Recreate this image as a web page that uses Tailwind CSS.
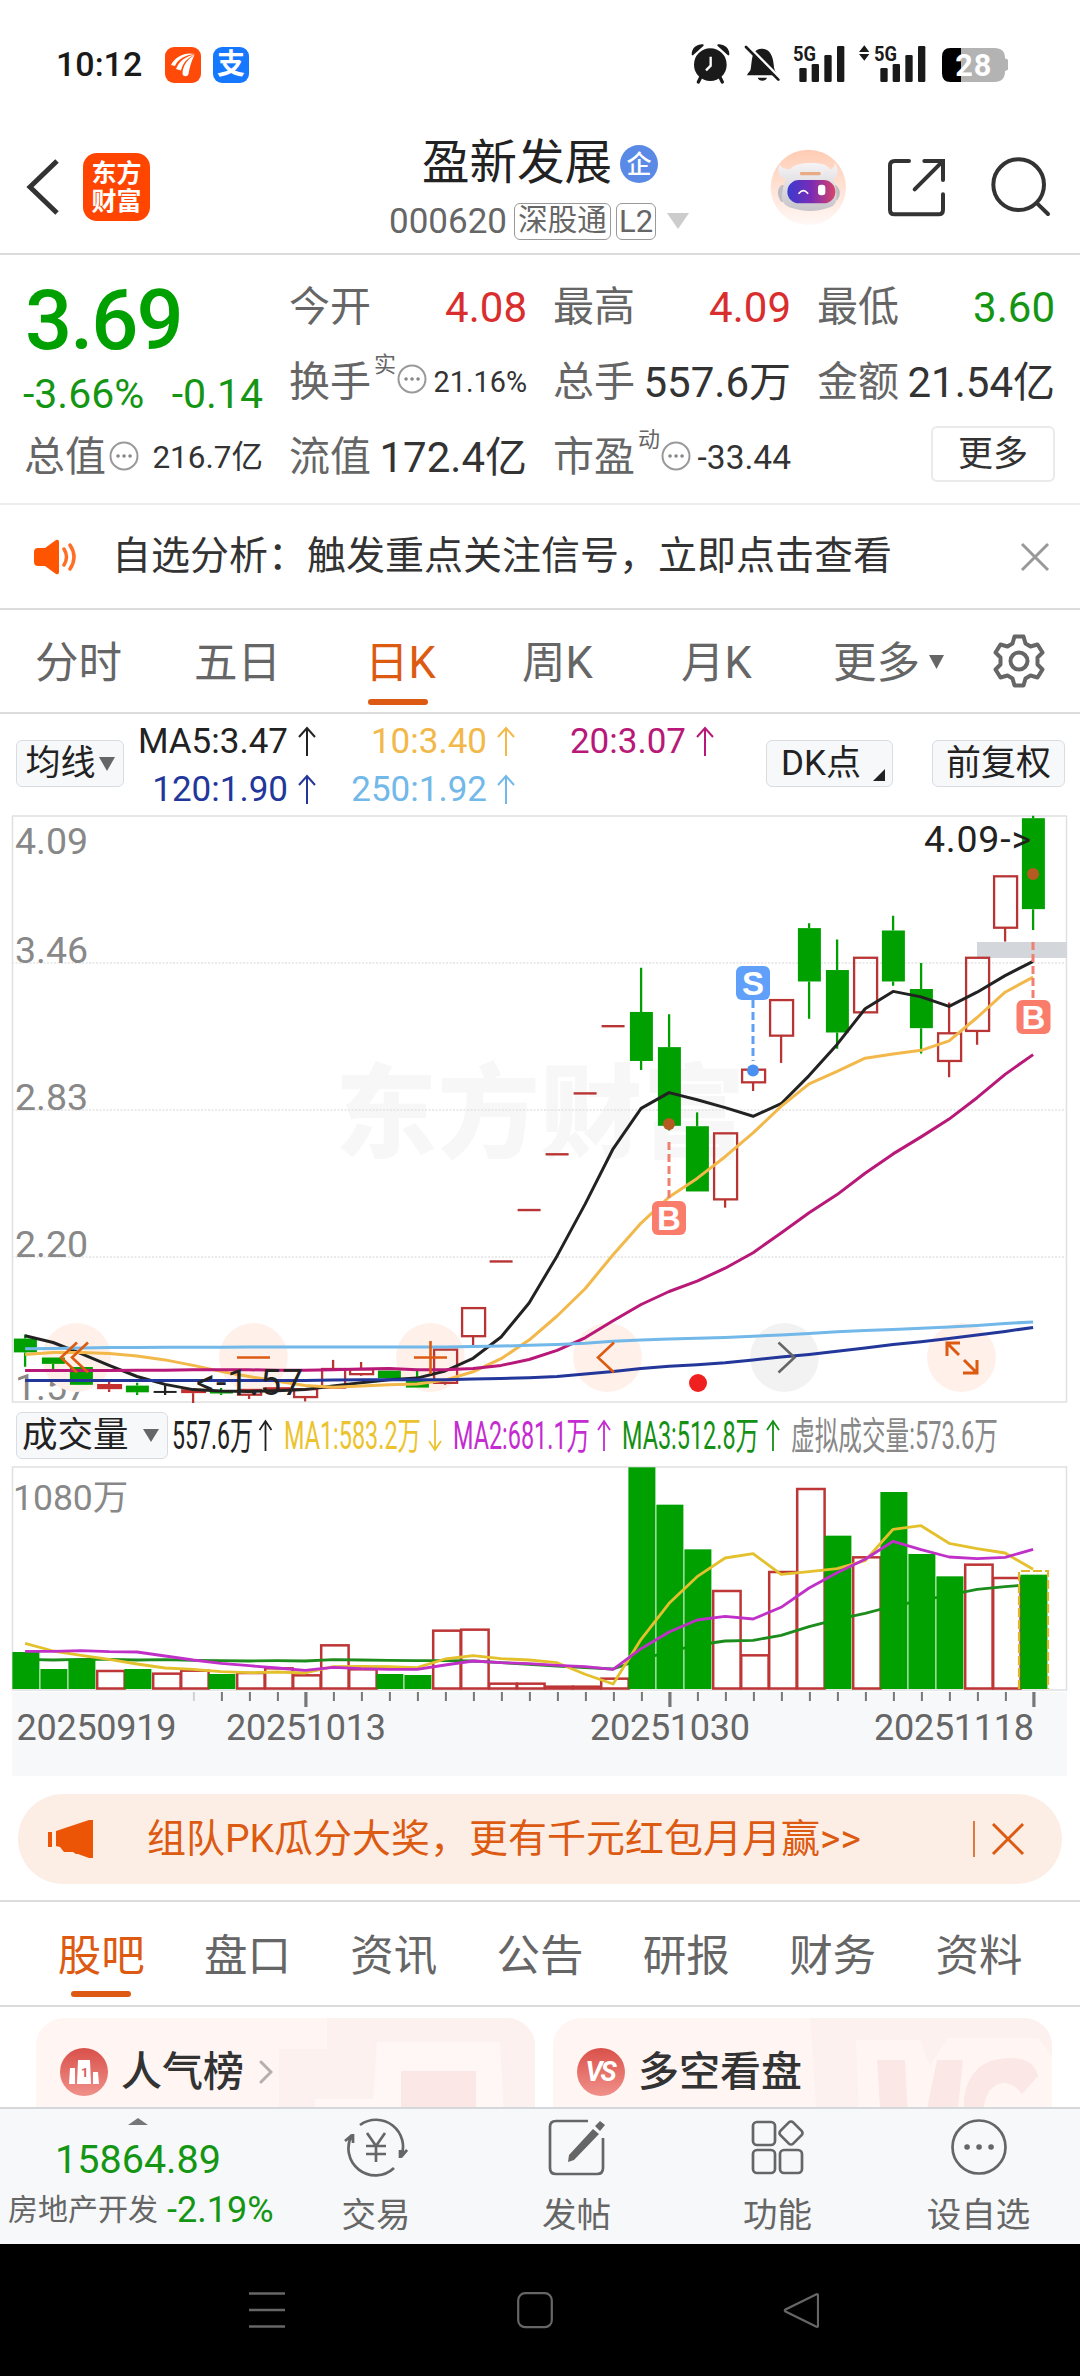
<!DOCTYPE html>
<html lang="zh-CN">
<head>
<meta charset="utf-8">
<title>盈新发展 000620</title>
<script src="https://cdn.jsdelivr.net/npm/@tailwindcss/browser@4"></script>
</head>
<body class="bg-white">
<div class="w-[1080px] h-[2376px] overflow-hidden flex flex-col bg-white text-[#333] leading-none whitespace-nowrap font-[Roboto,'Noto_Sans_CJK_SC',sans-serif]">

  <!-- status bar -->
  <div class="h-[120px] shrink-0 flex items-start pl-[56px]">
    <div class="mt-[46px] h-[36px] flex items-center text-[34px] font-medium text-[#1a1a1a] w-[109px]">10:12</div>
    <div class="mt-[47px] w-9 h-9 rounded-[9px] bg-[#ff4a0a]">
      <svg class="w-9 h-9" viewBox="0 0 36 36" fill="#fff"><path d="M6 18C11 9 20 5 30 7c-10 1-17 5-20 12zM11 22C14 14 21 9 30 7.500c-8 4-12 8-14 16zM17.500 27c0-8 5-15 12-19-3 6-5 12-6 19-1 3-5 3-6 0z"/></svg>
    </div>
    <div class="mt-[47px] ml-3 w-9 h-9 rounded-[9px] bg-[#1677ff] text-white text-[28px] font-bold flex items-center justify-center">支</div>
    <svg class="mt-[30px] ml-[431px] w-[340px] h-[70px] font-[Roboto]" viewBox="0 0 1020 210" fill="#1a1a1a">
      <circle cx="91" cy="104" r="49"/><path d="M38 73a27 27 0 0 1 30-27zM145 73a27 27 0 0 0-30-27z" stroke="#1a1a1a" stroke-width="6" stroke-linejoin="round"/><path d="M63 140l-8 16M119 140l8 16" stroke="#1a1a1a" stroke-width="10" stroke-linecap="round"/><path d="M92 80v27l-14 14" fill="none" stroke="#fff" stroke-width="7"/>
      <path d="M202 136c-3-2 8-10 10-18 5-24 0-60 32-62 37 0 36 44 39 60 2 10 12 18 8 20zM233 143h28c-3 12-25 12-28 0z"/><path d="M202 46l99 100" stroke="#fff" stroke-width="9"/><path d="M198 51l97 98" stroke="#1a1a1a" stroke-width="8" stroke-linecap="round"/>
      <g id="bars"><rect x="358" y="114" width="22" height="42" rx="4"/><rect x="395" y="102" width="22" height="54" rx="4"/><rect x="433" y="75" width="22" height="81" rx="4"/><rect x="471" y="48" width="22" height="108" rx="4"/>
      <text x="339" y="92" font-size="62" font-weight="700" textLength="69" lengthAdjust="spacingAndGlyphs">5G</text></g>
      <use href="#bars" x="243"/>
      <path d="M537 66l16-20 15 20zM537 72l16 20 15-20z"/>
      <path d="M810 54h133q32 0 32 31l9 4v30l-9 4q0 33-32 33H810z" fill="#b3b3b3"/><path d="M843 54v102h-32q-25 0-25-26V80q0-26 25-26z" fill="#000"/>
      <text x="826" y="139" font-size="92" font-weight="700" fill="#fff" textLength="108">28</text>
    </svg>
  </div>

  <!-- title bar -->
  <div class="h-[135px] shrink-0 flex border-b-2 border-[#dcdcdc]">
    <svg class="w-[34px] h-[56px] ml-[26px] mt-[39px]" viewBox="0 0 34 56" fill="none" stroke="#333" stroke-width="5"><path d="M31 2L4 28l27 26"/></svg>
    <div class="ml-[23px] mt-[33px] w-[67px] h-[68px] rounded-[14px] bg-[#ff4500] text-white text-[25px] font-bold flex flex-col items-center justify-center gap-[3px]"><span>东方</span><span>财富</span></div>
    <div class="ml-[234px] w-[310px] flex flex-col">
      <div class="flex items-center h-[50px] mt-[19px] pl-[38px]">
        <span class="text-[47.500px] text-[#222]">盈新发展</span>
        <span class="ml-[8px] w-[38px] h-[38px] rounded-full bg-[#5b8ae6] text-white text-[25px] font-medium flex items-center justify-center">企</span>
      </div>
      <div class="flex items-center h-[38px] mt-[13px] pl-[4px] text-[#666]">
        <span class="text-[35px] w-[120px] text-center">000620</span>
        <span class="ml-[6px] w-[97px] h-[37px] rounded-[6px] border border-[#999] text-[29.500px] flex items-center justify-center">深股通</span>
        <span class="ml-[5px] w-[40px] h-[37px] rounded-[6px] border border-[#999] text-[31px] flex items-center justify-center">L2</span>
        <svg class="ml-[11px] w-[22px] h-[16px]" viewBox="0 0 22 16"><path d="M0 0h22L11 16z" fill="#ccc"/></svg>
      </div>
    </div>
    <svg class="ml-[66px] mt-[20px] w-[320px] h-[100px]" viewBox="0 0 960 300" fill="none" stroke="#333" stroke-width="12" stroke-linecap="round">
      <defs>
        <linearGradient id="peach" x1="0" y1="0" x2="0" y2="1"><stop offset="0" stop-color="#ffccb4"/><stop offset="1" stop-color="#fff8f5"/></linearGradient>
        <linearGradient id="visor"><stop offset="0" stop-color="#3a3bd0"/><stop offset=".5" stop-color="#7a2bb4"/><stop offset="1" stop-color="#d8446a"/></linearGradient>
        <linearGradient id="helmet" x1="0" y1="0" x2="0" y2="1"><stop offset="0" stop-color="#f6f4f5"/><stop offset="1" stop-color="#c6c4ca"/></linearGradient>
      </defs>
      <g stroke="none"><circle cx="145" cy="142" r="113" fill="url(#peach)"/>
      <path d="M65 135q-22 18-2 50h20v-50zM228 135q22 22 4 46h-20v-46z" fill="#c0bdc4"/>
      <path d="M78 118q-32-12-20-44 8 12 32 14 14-20 62-20t58 20q16-4 14-20 20 30-4 50 8 20 10 50 2 26-20 34-58 22-122 0-26-10-22-40 2-24 12-44z" fill="url(#helmet)"/>
      <rect x="82" y="120" width="144" height="70" rx="35" fill="url(#visor)"/><rect x="120" y="96" width="62" height="10" rx="4" fill="#e8ab84"/>
      <rect x="174" y="134" width="22" height="32" rx="9" fill="#fff"/><path d="M117 160q13-16 26 0" stroke="#fff" stroke-width="5" fill="none"/></g>
      <path d="M447 63h-43q-14 0-14 14v132q0 14 14 14h131q14 0 14-14v-46M493 63h56v57M547 65l-83 83"/>
      <circle cx="776" cy="134" r="76"/><path d="M832 191l32 31"/>
    </svg>
  </div>

  <!-- quote -->
  <div class="h-[250px] shrink-0 border-b-2 border-[#eee] grid grid-cols-[238px_238px_238px_238px] gap-x-[26px] pl-[25px] text-[41px] text-[#666]">
    <div class="pt-[8px]">
      <div class="h-[114px] flex items-center text-[83px] tracking-[-2px] font-medium text-[#00a000]">3.69</div>
      <div class="h-[34px] flex items-center justify-between text-[41px] text-[#149614]"><span class="-ml-0.5">-3.66%</span><span>-0.14</span></div>
      <div class="mt-[9px] h-[75px] flex items-center -ml-px">总值<svg class="w-[30px] h-[30px] ml-[3px] mb-1" viewBox="0 0 30 30"><circle cx="15" cy="15" r="13.500" fill="none" stroke="#999" stroke-width="2"/><path d="M9 15h.1M15 15h.1M21 15h.1" stroke="#888" stroke-width="3.500" stroke-linecap="round"/></svg><span class="ml-auto text-[31.500px] text-[#333]">216.7亿</span></div>
    </div>
    <div class="pt-[15px]">
      <div class="h-[75px] flex items-center justify-between">今开<span class="text-[#d92e2e] text-[42px]">4.08</span></div>
      <div class="h-[75px] flex items-center">换手<span class="text-[22px] mb-9 ml-[3px]">实</span><svg class="w-[30px] h-[30px] mb-2 ml-px" viewBox="0 0 30 30"><circle cx="15" cy="15" r="13.500" fill="none" stroke="#999" stroke-width="2"/><path d="M9 15h.1M15 15h.1M21 15h.1" stroke="#888" stroke-width="3.500" stroke-linecap="round"/></svg><span class="ml-auto text-[28.800px] text-[#333]">21.16%</span></div>
      <div class="h-[75px] flex items-center justify-between">流值<span class="text-[#333] text-[42px]">172.4亿</span></div>
    </div>
    <div class="pt-[15px]">
      <div class="h-[75px] flex items-center justify-between">最高<span class="text-[#d92e2e] text-[42px]">4.09</span></div>
      <div class="h-[75px] flex items-center justify-between">总手<span class="text-[#333] text-[42px]">557.6万</span></div>
      <div class="h-[75px] flex items-center">市盈<span class="text-[22px] mb-9 ml-[3px]">动</span><svg class="w-[30px] h-[30px] mb-1 ml-px" viewBox="0 0 30 30"><circle cx="15" cy="15" r="13.500" fill="none" stroke="#999" stroke-width="2"/><path d="M9 15h.1M15 15h.1M21 15h.1" stroke="#888" stroke-width="3.500" stroke-linecap="round"/></svg><span class="ml-auto text-[33.500px] text-[#333]">-33.44</span></div>
    </div>
    <div class="pt-[15px]">
      <div class="h-[75px] flex items-center justify-between">最低<span class="text-[#149614] text-[42px]">3.60</span></div>
      <div class="h-[75px] flex items-center justify-between">金额<span class="text-[#333] text-[42px]">21.54亿</span></div>
      <div class="ml-auto mt-[6px] w-[124px] h-[56px] rounded-[6px] border-2 border-[#e8eaec] flex items-center justify-center text-[35px] text-[#333]">更多</div>
    </div>
  </div>

  <!-- notice -->
  <div class="h-[105px] shrink-0 border-b-2 border-[#dcdcdc] flex items-center pl-[33px]">
    <svg class="w-[46px] h-[36px]" viewBox="0 0 46 36"><path d="M5 9h7L23 1q3-1 3 2v30q0 3-3 2L12 27H5q-4 0-4-4V13q0-4 4-4z" fill="#ff5500"/><path d="M31 10q5 8 0 16M37 6q8 12 0 24" fill="none" stroke="#ff5500" stroke-width="3.500" stroke-linecap="round" opacity=".85"/></svg>
    <span class="ml-[33px] text-[39px]">自选分析：触发重点关注信号，立即点击查看</span>
    <svg class="ml-[128px] w-[30px] h-[30px]" viewBox="0 0 30 30"><path d="M2 2l26 26M28 2L2 28" stroke="#999" stroke-width="3"/></svg>
  </div>

  <!-- period tabs -->
  <div class="h-[104px] shrink-0 border-b-2 border-[#dcdcdc] flex pl-[35px] text-[43.500px] text-[#666]">
    <span class="mt-[32px] w-[159px]">分时</span>
    <span class="mt-[32px] w-[171px]">五日</span>
    <div class="relative pt-[32px] w-[157px] text-[#dc5a12]">日K<div class="absolute left-[3px] top-[89px] w-[60px] h-[6px] rounded-full bg-[#dc5a12]"></div></div>
    <span class="mt-[32px] w-[159px]">周K</span>
    <span class="mt-[32px] w-[152px]">月K</span>
    <span class="mt-[32px]">更多</span>
    <svg class="mt-[45px] ml-[9px] w-[15px] h-[14px]" viewBox="0 0 15 14"><path d="M0 0h15L7.500 14z" fill="#666"/></svg>
    <svg class="mt-[23px] ml-[47px] w-[56px] h-[56px]" viewBox="0 0 56 56" fill="none" stroke="#666" stroke-width="4" stroke-linejoin="round"><path d="M23.500 3.500h9l2 7 5 3 7-2 5 8-5 5v7l5 5-5 8-7-2-5 3-2 7h-9l-2-7-5-3-7 2-5-8 5-5v-7l-5-5 5-8 7 2 5-3z"/><circle cx="28" cy="28" r="8.500"/></svg>
  </div>

  <!-- moving averages -->
  <div class="h-[101px] shrink-0 flex items-start pl-[16px] text-[35px]">
    <div class="mt-[26px] w-[108px] h-[47px] rounded-[6px] border border-[#d9dde2] bg-[#f7f8fa] flex items-center justify-center gap-[3px] text-[35px] text-[#222]">均线<svg class="w-[16px] h-[14px]" viewBox="0 0 16 14"><path d="M0 0h16L8 14z" fill="#666"/></svg></div>
    <div class="mt-[3px] ml-[8px] w-[583px] grid grid-cols-[185px_199px_199px] grid-rows-[48px_48px]">
      <div class="flex items-center justify-end gap-[9px] text-[#222]">MA5:3.47<svg class="w-[20px] h-[30px]" viewBox="0 0 20 30" fill="none" stroke="currentColor" stroke-width="2"><path d="M10 30V2M2 11l8-9 8 9"/></svg></div>
      <div class="flex items-center justify-end gap-[9px] text-[#f2b84a]">10:3.40<svg class="w-[20px] h-[30px]" viewBox="0 0 20 30" fill="none" stroke="currentColor" stroke-width="2"><path d="M10 30V2M2 11l8-9 8 9"/></svg></div>
      <div class="flex items-center justify-end gap-[9px] text-[#b81877]">20:3.07<svg class="w-[20px] h-[30px]" viewBox="0 0 20 30" fill="none" stroke="currentColor" stroke-width="2"><path d="M10 30V2M2 11l8-9 8 9"/></svg></div>
      <div class="flex items-center justify-end gap-[9px] text-[#23379b]">120:1.90<svg class="w-[20px] h-[30px]" viewBox="0 0 20 30" fill="none" stroke="currentColor" stroke-width="2"><path d="M10 30V2M2 11l8-9 8 9"/></svg></div>
      <div class="flex items-center justify-end gap-[9px] text-[#72b8e8]">250:1.92<svg class="w-[20px] h-[30px]" viewBox="0 0 20 30" fill="none" stroke="currentColor" stroke-width="2"><path d="M10 30V2M2 11l8-9 8 9"/></svg></div>
    </div>
    <div class="mt-[26px] ml-[51px] w-[127px] h-[47px] rounded-[6px] border border-[#d9dde2] bg-[#f7f8fa] flex items-center pl-[14px] text-[#222]">DK点<svg class="ml-[12px] mt-[22px] w-[12px] h-[12px]" viewBox="0 0 12 12"><path d="M12 0v12H0z" fill="#222"/></svg></div>
    <div class="mt-[26px] ml-[39px] w-[133px] h-[47px] rounded-[6px] border border-[#d9dde2] bg-[#f7f8fa] flex items-center justify-center text-[#222]">前复权</div>
  </div>

  <!-- candlestick chart -->
  <svg id="kline" class="w-[1080px] h-[588px] shrink-0" viewBox="0 815 1080 588" fill="none"></svg>

  <!-- volume legend -->
  <div class="h-[63px] shrink-0 flex items-start pl-[16px]">
    <div class="mt-[9px] w-[152px] h-[47px] rounded-[6px] border border-[#d9dde2] bg-[#f7f8fa] flex items-center pl-[5px] text-[35.500px] text-[#222]">成交量<svg class="ml-[14px] w-[16px] h-[13px]" viewBox="0 0 16 13"><path d="M0 0h16L8 13z" fill="#666"/></svg></div>
    <svg class="w-[900px] h-[63px] font-[Roboto,'Noto_Sans_CJK_SC',sans-serif]" viewBox="168 1404 900 63" font-size="38">
      <g fill="#222"><text x="172" y="1450" textLength="81" lengthAdjust="spacingAndGlyphs">557.6万</text><path d="M265.500 1452v-29m-6 8l6-9 6 9" fill="none" stroke="#222" stroke-width="1.800"/></g>
      <g fill="#ecc32e"><text x="284" y="1450" textLength="137" lengthAdjust="spacingAndGlyphs">MA1:583.2万</text><path d="M435 1421v29m-6-8l6 9 6-9" fill="none" stroke="#ecc32e" stroke-width="1.800"/></g>
      <g fill="#c42bd0"><text x="453" y="1450" textLength="137" lengthAdjust="spacingAndGlyphs">MA2:681.1万</text><path d="M604 1452v-29m-6 8l6-9 6 9" fill="none" stroke="#c42bd0" stroke-width="1.800"/></g>
      <g fill="#149014"><text x="622" y="1450" textLength="137" lengthAdjust="spacingAndGlyphs">MA3:512.8万</text><path d="M773 1452v-29m-6 8l6-9 6 9" fill="none" stroke="#149014" stroke-width="1.800"/></g>
      <text x="791" y="1450" textLength="207" lengthAdjust="spacingAndGlyphs" fill="#888">虚拟成交量:573.6万</text>
    </svg>
  </div>

  <!-- volume chart -->
  <svg id="volume" class="w-[1080px] h-[310px] shrink-0" viewBox="0 1466 1080 310" fill="none"></svg>

  <!-- banner -->
  <div class="mt-[18px] mx-[18px] h-[90px] shrink-0 rounded-full bg-[#fdeee5] flex items-center text-[39px] text-[#dc5a12]">
    <svg class="ml-[29px] w-[48px] h-[40px]" viewBox="0 0 48 40" fill="#eb5505"><path d="M1 13h4v15H1zM9 12L42 1h4v38h-4l-11-4-2 0-3-2-9 0-4-5-4-1z"/></svg>
    <span class="ml-[52px]">组队PK瓜分大奖，更有千元红包月月赢&gt;&gt;</span>
    <div class="ml-auto w-[2px] h-[36px] bg-[#dc7a42]"></div>
    <svg class="ml-[15px] mr-[36px] w-[36px] h-[34px]" viewBox="0 0 36 34"><path d="M3 2l30 30M33 2L3 32" stroke="#dc5a12" stroke-width="3"/></svg>
  </div>

  <!-- content tabs -->
  <div class="mt-[16px] h-[107px] shrink-0 border-y-2 border-[#dcdcdc] flex pl-[28px] text-[43.500px] text-[#666] [&>*]:w-[146.300px] [&>*]:text-center [&>*]:pt-[33px]">
    <div class="relative text-[#dc5a12]">股吧<div class="absolute left-[43px] top-[89px] w-[60px] h-[6px] rounded-full bg-[#dc5a12]"></div></div>
    <div>盘口</div><div>资讯</div><div>公告</div><div>研报</div><div>财务</div><div>资料</div>
  </div>

  <!-- cards -->
  <div class="h-[100px] shrink-0 pt-[11px] pl-[36px] flex gap-[18px] overflow-hidden text-[41px] font-medium">
    <div class="w-[499px] h-[120px] shrink-0 rounded-t-[28px] overflow-hidden bg-[#fff6f4] grid">
      <svg class="col-start-1 row-start-1 w-[499px] h-[120px]" viewBox="36 2018 499 120"><path d="M327 2018h208v120H279v-89h48z" fill="#fdf1ef"/><path d="M377 2042h123l5 96H315v-39h58z" fill="#fff7f5"/><path d="M401 2071h75v70h-75z" fill="#fbe7e5"/></svg>
      <div class="col-start-1 row-start-1 h-[108px] flex items-center pl-[24px]">
        <svg class="w-[48px] h-[48px]" viewBox="0 0 48 48"><defs><linearGradient id="rd" x1="0" y1="0" x2="0" y2="1"><stop offset="0" stop-color="#d9504a"/><stop offset="1" stop-color="#f0908a"/></linearGradient></defs><circle cx="24" cy="24" r="24" fill="url(#rd)"/><path d="M10 20h5v16H9zM18 12h12l1 24H17zM33 24h5l1 12h-6z" fill="#fff"/><text x="21" y="29" font-size="13" fill="#d9605a" font-weight="700">1</text></svg>
        <span class="ml-[13px]">人气榜</span>
        <svg class="ml-[15px] w-[14px] h-[24px]" viewBox="0 0 14 24"><path d="M2 2l10 10L2 22" fill="none" stroke="#b5aeae" stroke-width="3" stroke-linecap="round"/></svg>
      </div>
    </div>
    <div class="w-[499px] h-[120px] shrink-0 rounded-t-[28px] overflow-hidden bg-[#fff6f4] grid">
      <svg class="col-start-1 row-start-1 w-[499px] h-[120px]" viewBox="553 2018 499 120"><path d="M810 2018h242v120H818z" fill="#fdf1ef"/><path d="M856 2040h64l10 26 18-28h90l14 18v82H860z" fill="#fff6f4"/><path d="M877 2060h28l4 78h-27zM937 2060h26l-8 78h-34zM964 2098q6-40 46-40 24 0 28 18l-16 18q-16-20-32-4-10 14-6 48h-20z" fill="#fbe7e5"/></svg>
      <div class="col-start-1 row-start-1 h-[108px] flex items-center pl-[24px]">
        <div class="w-[48px] h-[48px] rounded-full bg-linear-to-b from-[#d9504a] to-[#f0908a] text-white text-[27px] font-bold italic flex items-center justify-center tracking-[-2px] pr-0.5">VS</div>
        <span class="ml-[13px]">多空看盘</span>
      </div>
    </div>
  </div>

  <!-- action bar -->
  <div class="h-[137px] shrink-0 border-t-2 border-[#d5d8db] bg-[#f6f8fa] flex text-[34.500px] text-[#666]">
    <div class="w-[276px] flex flex-col items-center">
      <svg class="mt-[9px] w-[20px] h-[7px]" viewBox="0 0 20 7"><path d="M0 7L10 0l10 7z" fill="#777"/></svg>
      <span class="mt-[15px] text-[39.500px] text-[#149614]">15864.89</span>
      <div class="mt-[12px] flex items-center self-start pl-[8px] text-[30px]">房地产开发<span class="ml-[9px] text-[36px] text-[#149614]">-2.19%</span></div>
    </div>
    <div class="w-[200px] flex flex-col items-center pt-[8px] gap-[21px]"><svg class="w-[64px] h-[60px]" viewBox="-2 0 64 60" fill="none" stroke="#666" stroke-width="2.700"><path d="M14 8a27 27 0 0 1 41 32l6-7M54 41v-8M48 51A27 27 0 0 1 6 18l-7 6M7 17v9M21 16l9 13 9-13M20 29h20M20 37h20M30 29v16"/></svg>交易</div>
    <div class="w-[201px] flex flex-col items-center pt-[8px] gap-[21px]"><svg class="w-[60px] h-[60px]" viewBox="0 0 60 60" fill="none" stroke="#666" stroke-width="2.700"><path d="M41 4H9q-6 0-6 6v41q0 6 6 6h41q6 0 6-6V21"/><path d="M46 12l6 5-25 26-6 2 1-7zM48 9l5-5 5 4-5 6z" fill="#666" stroke="none"/></svg>发帖</div>
    <div class="w-[201px] flex flex-col items-center pt-[8px] gap-[21px]"><svg class="w-[60px] h-[60px]" viewBox="0 0 60 60" fill="none" stroke="#666" stroke-width="2.700"><rect x="5" y="5" width="22" height="23" rx="4"/><rect x="5" y="33" width="22" height="23" rx="4"/><rect x="32" y="33" width="22" height="23" rx="4"/><rect x="34" y="7" width="18" height="18" rx="3" transform="rotate(45 43 16)"/></svg>功能</div>
    <div class="w-[201px] flex flex-col items-center pt-[8px] gap-[21px]"><svg class="w-[60px] h-[60px]" viewBox="0 0 60 60" fill="none" stroke="#666" stroke-width="2.700"><circle cx="30" cy="30" r="26.500"/><path d="M18 30h.1M30 30h.1M42 30h.1" stroke-width="5.500" stroke-linecap="round"/></svg>设自选</div>
  </div>

  <!-- system navigation -->
  <div class="h-[132px] shrink-0 bg-black flex pt-[48px] pl-[249px]">
    <svg class="w-[36px] h-[37px]" viewBox="0 0 36 37"><path d="M0 1.500h36M0 18h36M0 34.500h36" stroke="#666" stroke-width="2.600"/></svg>
    <svg class="ml-[232px] w-[36px] h-[37px]" viewBox="0 0 36 37"><rect x="1.200" y="1.200" width="33.600" height="34" rx="7" fill="none" stroke="#666" stroke-width="2.200"/></svg>
    <svg class="ml-[230px] w-[36px] h-[37px]" viewBox="0 0 36 37"><path d="M33 2.500q2-1 2 1v30q0 2-2 1L2.500 19.500q-1.500-1 0-2z" fill="none" stroke="#666" stroke-width="2.200"/></svg>
  </div>
</div>

<script>
const GREEN = '#00a000', RED = '#b93535';
const cx = i => 25.1 + 28 * i;

// ---- daily candles: [kind, body top, body bottom, wick high, wick low] ----
const ky = v => 800 + v / 2.529;
const candles = [
  ['g',1362,1397,1352,1433],['g',1410,1426,1410,1441],['g',1434,1479,1434,1479],['f',1477,1490,1467,1497],
  ['g',1481,1498,1474,1505],['k',1497,1497,1480,1505],['f',1490,1500,1490,1527],['g',1494,1501,1487,1505],
  ['r',1492,1504,1492,1515],['f',1485,1495,1485,1495],['r',1490,1510,1490,1521],['r',1439,1486,1416,1486],
  ['r',1440,1452,1421,1456],['g',1443,1462,1443,1462],['g',1467,1486,1444,1486],['r',1390,1474,1390,1479],
  ['r',1285,1356,1285,1385],['l',1167],['l',1037],['l',896],['l',742],['l',572],
  ['g',536,660,424,683],['g',625,824,542,836],['g',825,990,790,990],['r',843,1010,843,1031],
  ['r',682,714,682,736],['r',506,596,506,665],['g',324,459,312,553],['g',430,588,353,629],
  ['r',399,537,399,537],['g',330,459,293,470],['g',478,577,412,641],['r',590,660,512,701],
  ['r',399,584,399,619],['r',193,323,193,358],['g',46,276,40,329]];
const averages = [
  ['#222',[1355,1372,1400,1430,1458,1478,1491,1495,1496,1494,1491,1482,1474,1466,1462,1444,1412,1358,1272,1153,1022,882,780,740,758,778,800,768,697,618,528,484,498,522,486,444,408]],
  ['#f2b84a',[1402,1397,1397,1400,1406,1416,1430,1445,1458,1470,1481,1485,1482,1479,1477,1467,1446,1413,1366,1305,1236,1150,1070,1004,957,902,842,775,718,686,653,642,633,609,550,486,448]],
  ['#b81877',[1443,1443,1443,1443,1442,1442,1441,1441,1441,1442,1442,1441,1439,1438,1441,1441,1438,1430,1415,1392,1360,1317,1276,1243,1217,1184,1145,1095,1044,998,944,895,852,807,753,694,644]],
  ['#23379b',[1468,1468,1468,1468,1468,1468,1468,1468,1468,1468,1468,1467,1466,1466,1466,1466,1464,1463,1461,1458,1452,1445,1438,1432,1428,1423,1416,1409,1402,1394,1386,1377,1370,1362,1353,1344,1334]],
  ['#72b8e8',[1388,1387,1386,1385,1385,1384,1384,1384,1383,1383,1383,1383,1383,1383,1383,1383,1382,1381,1379,1377,1374,1369,1366,1363,1361,1359,1356,1353,1349,1345,1342,1339,1336,1333,1329,1324,1320]]];
const line = (color, vals, y, w) =>
  `<polyline points="${vals.map((v,i)=>cx(i).toFixed(1)+','+y(v).toFixed(1)).join(' ')}" stroke="${color}" stroke-width="${w}" stroke-linejoin="round"/>`;

let k = '';
k += `<g font-family="'Noto Sans CJK SC',sans-serif" font-weight="900" font-size="102" fill="#f7f7f7"><text x="335" y="1150" textLength="410">东方财富</text></g>`;
k += `<rect x="12.500" y="816" width="1054" height="586" stroke="#e0e0e0" stroke-width="1.500"/>`;
for (const y of [963,1110,1257]) k += `<path d="M12 ${y}h1055" stroke="#e3e3e3" stroke-width="1.300" stroke-dasharray="2 1.500"/>`;
k += `<rect x="977" y="942" width="90" height="16" fill="#d3d6db"/>`;
k += `<g font-family="Roboto" font-size="37.500" fill="#888">` +
  [['4.09',853.500],['3.46',962.500],['2.83',1109.500],['2.20',1256.500],['1.57',1399.500]].map(([t,y])=>`<text x="15" y="${y}">${t}</text>`).join('') + `</g>`;
for (const [i,x] of [76.6,253.4,430.4,607.500,784.500,961.500].entries())
  k += `<circle cx="${x}" cy="1357.500" r="34.400" fill="${i===4?'#f2f2f2':'#fff0e9'}"/>`;
candles.forEach(([t,a,b,h,l], i) => {
  const x = cx(i), c = t==='g' ? GREEN : t==='k' ? '#222' : RED;
  if (t==='l') { k += `<path d="M${x-11.5} ${ky(a)}h23" stroke="${RED}" stroke-width="2.400"/>`; return; }
  k += `<path d="M${x} ${ky(h)}V${ky(a)}M${x} ${ky(b)}V${ky(l)}" stroke="${c}" stroke-width="2.300"/>`;
  if (t==='g') k += `<rect x="${x-11.2}" y="${ky(a)}" width="23" height="${(b-a)/2.529}" fill="${c}"/>`;
  else if (t==='k') k += `<path d="M${x-11.5} ${ky(a)}h23" stroke="${c}" stroke-width="2"/>`;
  else if (t==='f') k += `<rect x="${x-12}" y="${ky(a)}" width="25" height="${(b-a)/2.529}" fill="#c42f2f"/>`;
  else k += `<rect x="${x-11}" y="${ky(a)}" width="23" height="${(b-a)/2.529}" stroke="${c}" stroke-width="2.300"/>`;
});
for (const [c,v] of averages) k += line(c, v, ky, 3);
k += `<g font-family="Roboto" font-size="37.500" fill="#222"><text x="924" y="851.500" textLength="107">4.09-&gt;</text><text x="196" y="1394.500" textLength="107">&lt;-1.57</text></g>`;
// trade markers
k += `<g stroke-width="3" stroke-dasharray="8 4"><path d="M753 976V1061" stroke="#5f9ff5"/><path d="M669 1142V1202M1033 942V1001" stroke="#f08070"/></g>`;
k += `<circle cx="753" cy="1070.500" r="6" fill="#4a90f0"/><circle cx="669" cy="1124" r="6" fill="#b55a20"/><circle cx="1033" cy="874" r="6" fill="#b55a20"/>`;
for (const [x,y,c,t] of [[753,983,'#60a0fa','S'],[669,1218,'#fa7d6c','B'],[1033.5,1017,'#fa7d6c','B']])
  k += `<rect x="${x-17}" y="${y-17}" width="34" height="34" rx="6" fill="${c}"/><text x="${x}" y="${y+11.5}" text-anchor="middle" font-family="Liberation Sans" font-weight="700" font-size="33" fill="#fff">${t}</text>`;
// floating control glyphs
k += `<g stroke="#dc5a12" stroke-width="2.600"><path d="M77 1342.500L61 1357.500l16 15M88 1342.500L72 1357.500l16 15M237 1357.500h33M414 1357.500h33M430.500 1341v33M614 1342.500l-16 15 16 15"/><path d="M960 1343h-13v13M947 1343l12 12M963 1373h14v-13M977 1373l-13-13" stroke-width="3"/></g>`;
k += `<path d="M778.500 1342.500l16 15-16 15" stroke="#666" stroke-width="2.600"/><circle cx="698" cy="1383" r="9" fill="#f02020"/>`;
document.getElementById('kline').innerHTML = k;

// ---- volume ----
const vy = v => 1280 + v / 3;
const kinds = 'gggrgrrgrrrrrggrrrrrrrgggrrrrgrgggrrg';
const tops = [1116,1167,1137,1173,1167,1181,1172,1182,1179,1165,1186,1096,1168,1182,1185,1052,1049,1211,1211,1220,1220,1196,562,674,808,933,1126,876,627,767,832,636,822,889,854,894,884];
const vma = [
  [1090,1113,1126,1138,1152,1164,1168,1175,1178,1176,1179,1160,1159,1160,1163,1137,1127,1136,1140,1148,1183,1212,1078,970,890,834,821,883,875,866,842,748,737,790,806,819,868],
  [1114,1114,1112,1115,1116,1128,1140,1150,1157,1164,1171,1162,1166,1168,1168,1155,1143,1148,1151,1156,1160,1168,1106,1056,1020,1009,1017,982,924,878,838,784,809,831,836,832,808],
  [1138,1140,1138,1138,1140,1139,1141,1142,1143,1142,1143,1139,1140,1141,1142,1142,1143,1148,1153,1158,1163,1167,1138,1115,1095,1083,1081,1066,1040,1018,1000,978,962,945,928,920,913]];
let v = `<rect x="12" y="1692" width="1055" height="84" fill="#f7f8fa"/><rect x="12.500" y="1467" width="1054" height="223" stroke="#e0e0e0" stroke-width="1.500"/>`;
const base = 1688.5;
tops.forEach((t,i) => { if (kinds[i]==='r') v += `<rect x="${12.6+28*i+.6}" y="${vy(t)}" width="27.400" height="${base-vy(t)}" stroke="#bd3535" stroke-width="2.500"/>`; });
v += line('#1c8c1c', vma[2], vy, 2.8);
tops.forEach((t,i) => { if (kinds[i]==='g') v += `<rect x="${12.4+28*i}" y="${vy(t)}" width="27" height="${base+.5-vy(t)}" fill="${GREEN}"/>`; });
v += line('#e3c02c', vma[0], vy, 2.8) + line('#c030c8', vma[1], vy, 2.8);
v += `<path d="M1019 1689V1571H1048V1689" stroke="#e3b52c" stroke-width="2.200" stroke-dasharray="9 3"/>`;
v += `<text x="13" y="1510" font-family="Roboto,'Noto Sans CJK SC',sans-serif" font-size="35.500" fill="#888">1080万</text>`;
for (let i = 6; i < 37; i++) {
  const big = i===10 || i===23 || i===36;
  v += `<path d="M${cx(i)+.8} 1692V${big?1707:1701}" stroke="#777" stroke-width="${big?3.2:2}" opacity="${i===6?.3:1}"/>`;
}
v += `<g font-family="Roboto" font-size="36" fill="#666"><text x="16.500" y="1740" textLength="160">20250919</text><text x="226" y="1740" textLength="160">20251013</text><text x="590" y="1740" textLength="160">20251030</text><text x="874" y="1740" textLength="160">20251118</text></g>`;
document.getElementById('volume').innerHTML = v;
</script>
</body>
</html>
